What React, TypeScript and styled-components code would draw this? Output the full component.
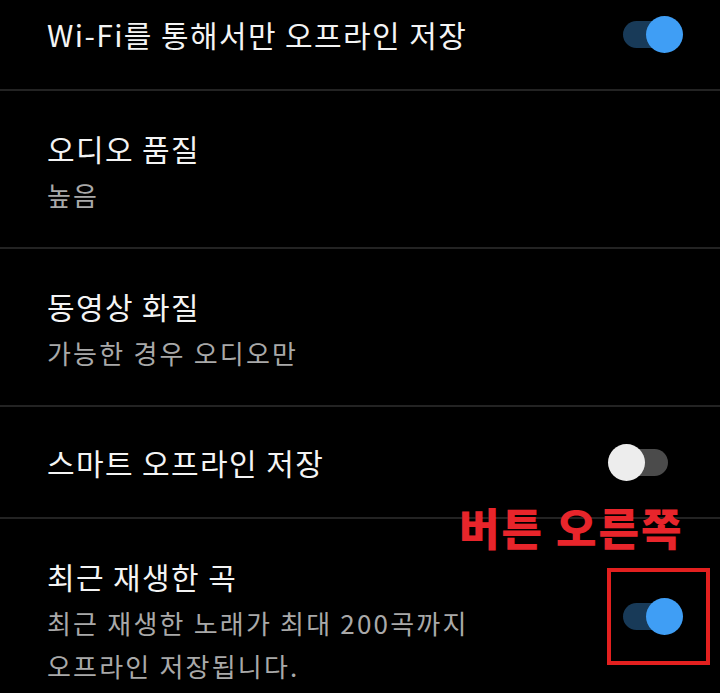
import React from "react";
import styled, { createGlobalStyle } from "styled-components";

const Global = createGlobalStyle`
  html, body {
    margin: 0;
    padding: 0;
    background: #000;
    overflow: hidden;
  }
  body {
    font-family: "Noto Sans CJK KR", "Noto Sans", sans-serif;
    -webkit-font-smoothing: antialiased;
  }
`;

const Page = styled.div`
  width: 720px;
  height: 693px;
  overflow: hidden;
  background: #000;
`;

const List = styled.div`
  display: flex;
  flex-direction: column;
  margin-top: -21px;
`;

const Row = styled.div<{ $tall?: boolean }>`
  position: relative;
  display: flex;
  align-items: center;
  justify-content: space-between;
  box-sizing: border-box;
  padding: ${(p) => (p.$tall ? "36px 37px 31px 47px" : "0 37px 0 47px")};
  min-height: ${(p) => (p.$tall ? "158px" : "112px")};
  border-bottom: 2px solid #232323;
`;

const Texts = styled.div`
  display: flex;
  flex-direction: column;
  gap: 3px;
`;

const Title = styled.div`
  font-size: 30px;
  line-height: 43px;
  letter-spacing: 1.4px;
  color: #f4f4f4;
  white-space: nowrap;
`;

const Sub = styled.div`
  font-size: 26px;
  line-height: 43px;
  letter-spacing: 2.2px;
  color: #a9a9a9;
  white-space: nowrap;
`;

const Toggle = styled.div<{ $lift?: number }>`
  position: relative;
  flex: none;
  width: 75px;
  height: 37px;
  margin-bottom: ${(p) => (p.$lift ? `${p.$lift * 2}px` : "0")};
`;

const Track = styled.div<{ $on?: boolean }>`
  position: absolute;
  left: 15px;
  top: 5px;
  width: 45px;
  height: 27px;
  border-radius: 14px;
  background: ${(p) => (p.$on ? "#183a58" : "#4b4b4b")};
`;

const Thumb = styled.div<{ $on?: boolean }>`
  position: absolute;
  top: 0;
  left: ${(p) => (p.$on ? "38px" : "0")};
  width: 37px;
  height: 37px;
  border-radius: 50%;
  background: ${(p) => (p.$on ? "#3f9ef5" : "#ededed")};
`;

const Note = styled.div`
  position: absolute;
  left: 459px;
  top: -18px;
  font-size: 44px;
  line-height: 1.2;
  font-weight: 900;
  color: #e8252b;
  letter-spacing: 2px;
  white-space: nowrap;
`;

const Mark = styled.div`
  position: absolute;
  left: 607px;
  top: 49px;
  width: 103px;
  height: 97px;
  box-sizing: border-box;
  border: 4px solid #e3201f;
`;

const Switch = ({ on, lift }: { on?: boolean; lift?: number }) => (
  <Toggle $lift={lift}>
    <Track $on={on} />
    <Thumb $on={on} />
  </Toggle>
);

export default function App() {
  return (
    <>
      <Global />
      <Page>
        <List>
          <Row>
            <Title>Wi-Fi를 통해서만 오프라인 저장</Title>
            <Switch on />
          </Row>
          <Row $tall>
            <Texts>
              <Title>오디오 품질</Title>
              <Sub>높음</Sub>
            </Texts>
          </Row>
          <Row $tall>
            <Texts>
              <Title>동영상 화질</Title>
              <Sub>가능한 경우 오디오만</Sub>
            </Texts>
          </Row>
          <Row>
            <Title>스마트 오프라인 저장</Title>
            <Switch />
          </Row>
          <Row $tall>
            <Texts>
              <Title>최근 재생한 곡</Title>
              <Sub>
                최근 재생한 노래가 최대 200곡까지
                <br />
                오프라인 저장됩니다.
              </Sub>
            </Texts>
            <Switch on lift={5} />
            <Note>버튼 오른쪽</Note>
            <Mark />
          </Row>
        </List>
      </Page>
    </>
  );
}
